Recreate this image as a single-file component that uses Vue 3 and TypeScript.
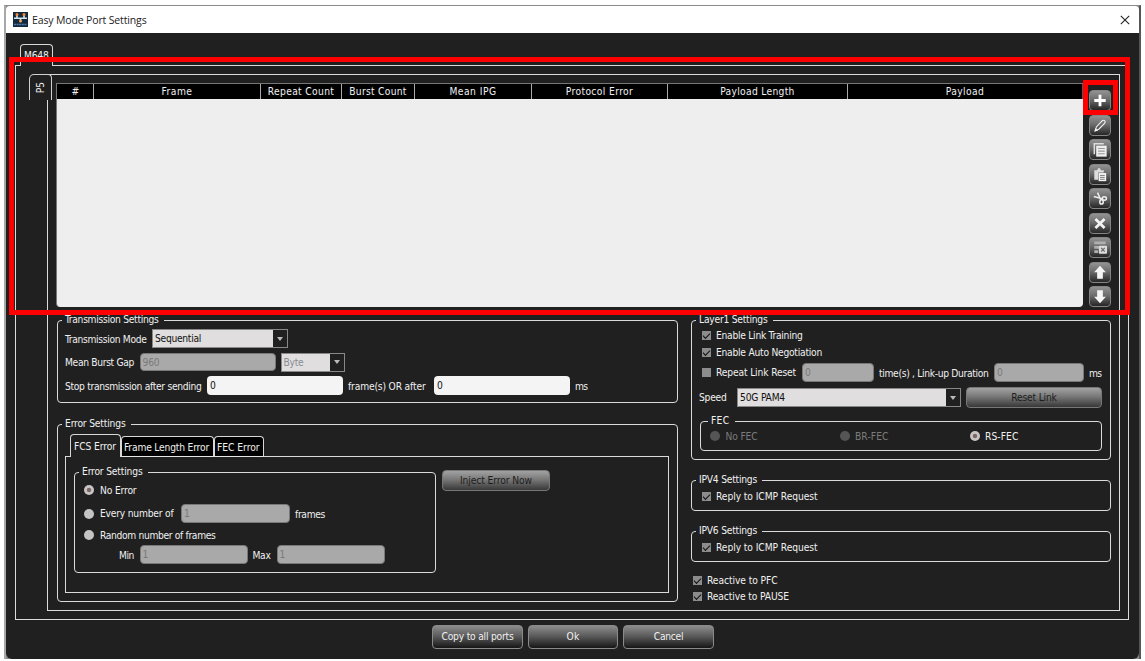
<script setup lang="ts">
import type { Directive } from 'vue'

// Tracks a label out (or in) so that it fills the given width in pixels.
const vFit: Directive<HTMLElement, number> = {
  mounted(el, binding) {
    const natural = el.getBoundingClientRect().width
    const count = (el.textContent ?? '').length
    if (count > 0 && natural > 0) {
      el.style.letterSpacing = `${((binding.value - natural) / count).toFixed(3)}px`
    }
  },
}

const columns = [
  { name: '#', fit: 7 },
  { name: 'Frame', fit: 31 },
  { name: 'Repeat Count', fit: 66.5 },
  { name: 'Burst Count', fit: 57.5 },
  { name: 'Mean IPG', fit: 47 },
  { name: 'Protocol Error', fit: 67.5 },
  { name: 'Payload Length', fit: 74.5 },
  { name: 'Payload', fit: 38.5 },
]

const tools = ['add', 'edit', 'copy', 'paste', 'cut', 'delete', 'clear', 'up', 'down']

const fecModes = [
  { name: 'No FEC', on: false, fit: 32 },
  { name: 'BR-FEC', on: false, fit: 33.5 },
  { name: 'RS-FEC', on: true, fit: 33.5 },
]
</script>

<template>
  <div class="desktop">
    <div class="window">
      <header class="titlebar">
        <svg class="logo" viewBox="0 0 15 15">
          <rect width="15" height="15" fill="#14283c" />
          <path d="M1 6.2h13M4 3v3M11 3v3M7.5 7v3" stroke="#d5e4e8" stroke-width="1.6" />
          <circle cx="4" cy="2.6" r="1.5" fill="#f08a3c" />
          <circle cx="11" cy="2.6" r="1.5" fill="#f08a3c" />
          <circle cx="7.5" cy="9.2" r="1.4" fill="#f0a45c" />
          <path d="M1 12.5h13" stroke="#4c7db0" stroke-width="1.6" stroke-dasharray="2 .6" />
        </svg>
        <span class="title"><span v-fit="114.5">Easy Mode Port Settings</span></span>
        <svg class="close" viewBox="0 0 10 10"><path d="M.8.8l8.4 8.4M9.2.8L.8 9.2" stroke="#222" stroke-width="1.1" /></svg>
      </header>

      <main class="body">
        <div class="tab module-tab"><span v-fit="24.5">M648</span></div>
        <section class="module-pane">
          <div class="port-tab"><span>P5</span></div>
          <div class="port-pane">
            <div class="top">
              <div class="table">
                <div class="thead">
                  <div v-for="c in columns" :key="c.name" class="th"><span v-fit="c.fit">{{ c.name }}</span></div>
                </div>
              </div>
              <div class="tools">
                <button v-for="t in tools" :key="t" class="tool">
                  <svg viewBox="0 0 20 20">
                    <path v-if="t === 'add'" d="M10 4v12M4 10h12" stroke="#fff" stroke-width="3" />
                    <g v-else-if="t === 'edit'" fill="none" stroke="#f2f2f2" stroke-width="1.2">
                      <path d="M5 15.5l1.2-4 6.2-6.6q1.5-1 2.6.2 1 1.2 0 2.5l-6.3 6.3z" />
                      <path d="M5 15.5l.5-1.8 1.3 1.3z" fill="#f2f2f2" />
                    </g>
                    <g v-else-if="t === 'copy'">
                      <path d="M4 15V4h10" fill="none" stroke="#ddd" stroke-width="1.6" />
                      <rect x="6" y="6" width="11" height="11.5" fill="#eee" />
                      <path d="M8 9h7M8 11.7h7M8 14.4h7" stroke="#999" stroke-width="1.1" />
                    </g>
                    <g v-else-if="t === 'paste'">
                      <path d="M4 5.5h3l1-2h2l1 2h3V8H8v7.5H4z" fill="#ddd" />
                      <rect x="8.5" y="8.5" width="8" height="8.5" fill="#f4f4f4" />
                      <path d="M10 11h5M10 13h5M10 15h5" stroke="#777" />
                    </g>
                    <g v-else-if="t === 'cut'" fill="none" stroke="#eee" stroke-width="1.6">
                      <path d="M3.5 7.8l9.3 2.6M7.4 3.8l3.6 8" />
                      <ellipse cx="14.6" cy="10" rx="2.2" ry="1.8" /><ellipse cx="11.6" cy="13.6" rx="1.8" ry="2.2" />
                    </g>
                    <path v-else-if="t === 'delete'" d="M5.2 5.2l9.6 9.6M14.8 5.2l-9.6 9.6" stroke="#f4f4f4" stroke-width="2.8" />
                    <g v-else-if="t === 'clear'">
                      <path d="M4 5.2h12M4 9.8h5M4 14.4h4" stroke="#b0b0b0" stroke-width="2.8" />
                      <rect x="8.8" y="8.2" width="8.6" height="8.4" rx="1" fill="#dcdcdc" />
                      <path d="M11.2 10.4l3.8 4M15 10.4l-3.8 4" stroke="#666" stroke-width="1.3" />
                    </g>
                    <path v-else-if="t === 'up'" d="M10 2.8l6.2 7H13v6.8H7V9.8H3.8z" fill="#f4f4f4" />
                    <path v-else d="M10 17.2l-6.2-7H7V3.4h6v6.8h3.2z" fill="#f4f4f4" />
                  </svg>
                </button>
              </div>
            </div>

            <div class="settings">
              <div class="left">
                <fieldset class="group transmission">
                  <legend><span v-fit="93.5">Transmission Settings</span></legend>
                  <div class="row mode">
                    <label><span v-fit="81.5">Transmission Mode</span></label>
                    <div class="select dim"><span class="value"><span v-fit="46">Sequential</span></span><i class="arrow"></i></div>
                  </div>
                  <div class="row gap-row">
                    <label><span v-fit="69">Mean Burst Gap</span></label>
                    <div class="input off"><span v-fit="17">960</span></div>
                    <div class="select off"><span class="value"><span v-fit="20">Byte</span></span><i class="arrow"></i></div>
                  </div>
                  <div class="row stop">
                    <label><span v-fit="136.5">Stop transmission after sending</span></label>
                    <div class="input">0</div>
                    <label><span v-fit="77.5">frame(s) OR after</span></label>
                    <div class="input">0</div>
                    <label><span v-fit="12.5">ms</span></label>
                  </div>
                </fieldset>

                <fieldset class="group errors">
                  <legend><span v-fit="60.5">Error Settings</span></legend>
                  <div class="tabs">
                    <div class="tab etab active"><span v-fit="42">FCS Error</span></div>
                    <div class="tab etab flen"><span v-fit="85">Frame Length Error</span></div>
                    <div class="tab etab fec"><span v-fit="42.5">FEC Error</span></div>
                  </div>
                  <div class="error-pane">
                    <fieldset class="group fcs">
                      <legend><span v-fit="60.5">Error Settings</span></legend>
                      <div class="row r1"><i class="radio on"></i><label><span v-fit="36.5">No Error</span></label></div>
                      <div class="row r2">
                        <i class="radio"></i><label><span v-fit="73.5">Every number of</span></label>
                        <div class="input off">1</div><label><span v-fit="30">frames</span></label>
                      </div>
                      <div class="row r3"><i class="radio"></i><label><span v-fit="115.5">Random number of frames</span></label></div>
                      <div class="row r4">
                        <label><span v-fit="15">Min</span></label><div class="input off">1</div>
                        <label><span v-fit="18">Max</span></label><div class="input off">1</div>
                      </div>
                    </fieldset>
                    <button class="btn disabled inject"><span v-fit="72">Inject Error Now</span></button>
                  </div>
                </fieldset>
              </div>

              <div class="right">
                <fieldset class="group layer1">
                  <legend><span v-fit="68.5">Layer1 Settings</span></legend>
                  <div class="row check"><i class="box on"></i><label><span v-fit="86.5">Enable Link Training</span></label></div>
                  <div class="row check"><i class="box on"></i><label><span v-fit="106">Enable Auto Negotiation</span></label></div>
                  <div class="row repeat">
                    <i class="box"></i><label><span v-fit="80">Repeat Link Reset</span></label>
                    <div class="input off">0</div><label class="low"><span v-fit="109.5">time(s) , Link-up Duration</span></label>
                    <div class="input off">0</div><label class="low"><span v-fit="12.5">ms</span></label>
                  </div>
                  <div class="row speed">
                    <label><span v-fit="27.5">Speed</span></label>
                    <div class="select dim"><span class="value"><span v-fit="45">50G PAM4</span></span><i class="arrow"></i></div>
                    <button class="btn disabled"><span v-fit="45.5">Reset Link</span></button>
                  </div>
                  <fieldset class="group fec-group">
                    <legend><span v-fit="18.5">FEC</span></legend>
                    <div class="row fec-row">
                      <span v-for="m in fecModes" :key="m.name" class="option" :class="{ faded: !m.on }">
                        <i class="radio" :class="{ on: m.on }"></i><label><span v-fit="m.fit">{{ m.name }}</span></label>
                      </span>
                    </div>
                  </fieldset>
                </fieldset>

                <fieldset class="group ip">
                  <legend><span v-fit="58">IPV4 Settings</span></legend>
                  <div class="row check"><i class="box on"></i><label><span v-fit="101.5">Reply to ICMP Request</span></label></div>
                </fieldset>
                <fieldset class="group ip">
                  <legend><span v-fit="58">IPV6 Settings</span></legend>
                  <div class="row check"><i class="box on"></i><label><span v-fit="101.5">Reply to ICMP Request</span></label></div>
                </fieldset>
                <div class="reactive">
                  <div class="row check"><i class="box on"></i><label><span v-fit="70.5">Reactive to PFC</span></label></div>
                  <div class="row check"><i class="box on"></i><label><span v-fit="82">Reactive to PAUSE</span></label></div>
                </div>
              </div>
            </div>
          </div>
        </section>

        <footer class="actions">
          <button class="btn"><span v-fit="72">Copy to all ports</span></button>
          <button class="btn"><span v-fit="13">Ok</span></button>
          <button class="btn"><span v-fit="29.5">Cancel</span></button>
        </footer>
      </main>
    </div>
    <div class="highlight table-highlight"></div>
    <div class="highlight add-highlight"></div>
  </div>
</template>

<style>
body {
  margin: 0;
  background: #fff;
}
</style>

<style scoped>
* {
  box-sizing: border-box;
}
.desktop {
  position: relative;
  width: 1145px;
  height: 661px;
  padding: 5px 4px 2px;
  overflow: hidden;
  background: #fff;
  font: 10.2px/13px "DejaVu Sans Condensed", "DejaVu Sans", sans-serif;
  color: #f0f0f0;
  white-space: nowrap;
}
.window {
  width: 1137px;
  height: 654px;
  border: solid #8c8c8c;
  border-width: 1px 2px 0;
  border-left-color: #a8a8a8;
  border-right-color: #555;
  background: #8c8c8c;
}
.titlebar {
  display: flex;
  align-items: center;
  height: 27px;
  padding: 0 9px 0 6.5px;
  background: #fff;
  color: #222;
  border-radius: 4px 4px 0 0;
}
.logo {
  width: 15px;
  height: 15px;
}
.title {
  flex: 1;
  padding: 2px 0 0 4.5px;
  font-family: "Open Sans", "Noto Sans", sans-serif;
  font-size: 10.5px;
}
.close {
  width: 10px;
  height: 10px;
}
.body {
  height: 626px;
  padding: 11px 9px 0;
  background: #202020;
  border-radius: 0 0 6px 6px;
}
.tab {
  position: relative;
  z-index: 1;
  border: 1px solid #d8d8d8;
  border-bottom: 0;
  border-radius: 4px 4px 0 0;
  background: #202020;
}
.module-tab {
  width: 33px;
  height: 22px;
  margin: 0 0 -1px 5px;
  padding: 4px 0 0 3px;
}
.module-pane {
  display: flex;
  align-items: flex-start;
  width: 1114px;
  height: 555px;
  padding: 8px 0 0 13px;
  border: 1px solid #dcdcdc;
}
.port-tab {
  position: relative;
  z-index: 1;
  display: flex;
  align-items: center;
  justify-content: center;
  width: 23px;
  height: 26px;
  margin-right: -5px;
  border: 1px solid #d0d0d0;
  border-bottom: 0;
  border-radius: 5px 4px 0 0;
  background: #202020;
}
.port-tab span {
  transform: rotate(-90deg);
}
.port-pane {
  width: 1073px;
  height: 537px;
  padding: 8px 0 0 8px;
  border: 1px solid #dcdcdc;
}
.top {
  display: flex;
  gap: 6px;
  height: 224px;
}
.table {
  width: 1027px;
  height: 224px;
  overflow: hidden;
  border-top: 1px solid #777;
  border-left: 1px solid #777;
  border-radius: 0 0 4px 4px;
  background: #eee;
}
.thead {
  display: grid;
  grid-template-columns: 37px 167px 81px 73px 117px 136px 180px 1fr;
  height: 15px;
  background: #000;
}
.th {
  text-align: center;
  line-height: 15px;
  border-right: 1px solid #aaa;
}
.th:last-child {
  border-right-color: #555;
}
.tools {
  display: flex;
  flex-direction: column;
  justify-content: space-between;
  padding-top: 7px;
}
.tool {
  width: 22px;
  height: 21px;
  padding: 0;
  border: 1px solid #858585;
  border-radius: 4px;
  background: linear-gradient(#929292, #6c6c6c 45%, #262626);
}
.tool svg {
  display: block;
  width: 20px;
  height: 19px;
}
.settings {
  display: grid;
  grid-template-columns: 621px 420px;
  gap: 13px;
  padding: 7px 0 0 1px;
}
.group {
  min-width: 0;
  margin: 0;
  padding: 0 0 0 4px;
  border: 1px solid #dadada;
  border-radius: 4px;
}
.group legend {
  height: 13px;
  padding: 0 5px 0 3px;
}
.group legend span {
  position: relative;
  top: -1px;
}
.row {
  display: grid;
  align-items: center;
  height: 19px;
}
.input {
  height: 18.5px;
  padding-left: 3px;
  line-height: 20px;
  border-radius: 4px;
  background: #f4f4f4;
  color: #111;
}
.input.off {
  padding-left: 2px;
  line-height: 18px;
  border: 1.5px solid #787878;
  background: #a9a9a9;
  color: #7a7a7a;
}
.select {
  display: flex;
  height: 19px;
  border: 1px solid #888;
  background: #e0dede;
  color: #111;
}
.select.off {
  color: #8a8d94;
}
.value {
  flex: 1;
  padding-left: 2px;
  line-height: 18px;
}
.arrow {
  display: flex;
  align-items: center;
  justify-content: center;
  width: 14px;
  background: #202020;
}
.arrow::before {
  content: "";
  border: 3px solid transparent;
  border-top: 4px solid #bbb;
  border-bottom: 0;
}
.transmission {
  height: 89px;
}
.transmission .row {
  margin: 0 0 4.5px 3px;
}
.transmission label,
.low {
  padding-top: 1px;
}
.transmission .mode {
  grid-template-columns: 87px 136px;
  margin-top: 2px;
}
.gap-row {
  grid-template-columns: 74.5px 136px 64px;
}
.gap-row .select {
  margin-left: 5px;
  width: 64px;
}
.stop {
  grid-template-columns: 142px 136px 5px 86px 136px 5px 20px;
}
.stop label:nth-child(3) {
  grid-column: 4;
}
.stop label:nth-child(5) {
  grid-column: 7;
}
.errors {
  height: 184px;
  margin-top: 15px;
}
.tabs {
  display: flex;
  align-items: flex-end;
  height: 26px;
  padding-left: 8px;
}
.etab {
  height: 21px;
  padding: 4px 0 0 2px;
  background: #000;
}
.etab.active {
  width: 51px;
  height: 23px;
  padding: 5px 0 0 3px;
  background: #202020;
}
.etab.flen {
  width: 93px;
}
.etab.fec {
  width: 50px;
}
.etab:not(.active) {
  border-bottom: 1px solid #e8e8e8;
}
.error-pane {
  display: flex;
  align-items: flex-start;
  gap: 6px;
  width: 604px;
  height: 137px;
  margin: -1px 0 0 3px;
  padding: 9px 0 0 8px;
  border: 1px solid #dadada;
}
.fcs {
  width: 362px;
  height: 107px;
}
.fcs .row {
  padding-left: 5px;
}
.radio {
  display: block;
  width: 10px;
  height: 10px;
  border-radius: 50%;
  background: #c4c4c4;
}
.radio.on {
  background: radial-gradient(circle, #7a6664 0 1.8px, #c8c4c4 2.6px);
}
.fcs .r1,
.fcs .r3 {
  grid-template-columns: 16px 130px;
  height: 16px;
}
.r1 {
  margin-top: 3px;
}
.r2 {
  grid-template-columns: 16px 81px 108.5px 5.5px 40px;
  margin-top: 6px;
}
.r2 label:last-child {
  grid-column: 5;
  padding-top: 2px;
}
.r3 {
  margin-top: 4px;
}
.fcs .r4 {
  grid-template-columns: 20.5px 108px 5px 24px 108.5px;
  margin-top: 2px;
  padding-left: 40px;
}
.r4 label {
  padding-top: 1px;
}
.r4 label:nth-child(3) {
  grid-column: 4;
}
.btn {
  padding: 0;
  border: 1px solid #8a8a8a;
  border-radius: 4px;
  background: linear-gradient(#8c8c8c, #5c5c5c 45%, #161616);
  color: #f0f0f0;
  font: inherit;
  text-align: center;
}
.btn.disabled {
  height: 21px;
  border-color: #777;
  background: linear-gradient(#a2a2a2, #787878 45%, #383838);
  color: #1c1c1c;
}
.inject {
  width: 108px;
  margin-top: 4px;
}
.box {
  display: block;
  width: 9px;
  height: 9px;
  background: #8c8c8c;
}
.box.on::before {
  content: "";
  display: block;
  width: 6px;
  height: 3px;
  margin: 0 0 0 1px;
  border: solid #111;
  border-width: 0 0 1.5px 1.5px;
  transform: translateY(2px) rotate(-45deg);
}
.layer1 {
  height: 146px;
}
.check {
  grid-template-columns: 14.5px 1fr;
  height: 17px;
  padding-left: 5.5px;
}
.repeat {
  grid-template-columns: 14.5px 86px 72px 5px 115px 90px 5px 14px;
  margin-top: 2px;
  padding-left: 5.5px;
}
.repeat label:nth-child(4) {
  grid-column: 5;
}
.repeat label:nth-child(6) {
  grid-column: 8;
}
.speed {
  grid-template-columns: 38px 224px 136px;
  height: 21px;
  margin-top: 5px;
  padding-left: 3px;
}
.speed .btn {
  width: 136px;
  margin-left: 5px;
}
.fec-group {
  width: 402px;
  height: 36px;
  margin: 7px 0 0 4px;
}
.fec-group legend {
  margin-left: 3px;
}
.fec-row {
  grid-template-columns: 129.5px 130px 100px;
  height: 16px;
  padding-left: 5px;
}
.option {
  display: grid;
  grid-template-columns: 15.5px 1fr;
  align-items: center;
}
.faded {
  color: #7c7c7c;
}
.faded .radio {
  background: #555;
}
.ip {
  height: 37px;
  margin-top: 14px;
}
.ip .check {
  height: 18px;
}
.reactive {
  padding-top: 11px;
}
.reactive .check {
  height: 15.5px;
  padding-left: 1.5px;
}
.actions {
  display: flex;
  justify-content: center;
  gap: 5px;
  margin: 5px 0 0 1px;
}
.actions .btn {
  width: 90.5px;
  height: 23.5px;
}
.highlight {
  position: absolute;
  z-index: 5;
  border: 5px solid #f00;
}
.table-highlight {
  left: 9px;
  top: 57px;
  width: 1121px;
  height: 258px;
}
.add-highlight {
  left: 1083px;
  top: 80px;
  width: 35px;
  height: 35px;
}
</style>
